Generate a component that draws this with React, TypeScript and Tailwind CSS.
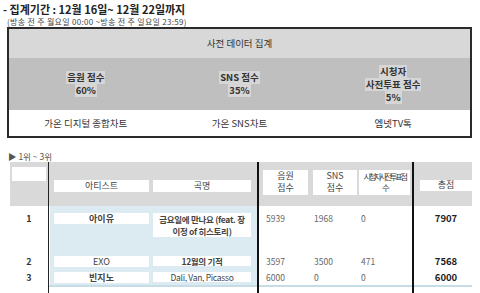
import React from "react";

const F = { fontFamily: '"Noto Sans CJK KR", "Noto Sans", sans-serif' };

function Box({ children, className = "" }: { children: React.ReactNode; className?: string }) {
  return <div className={"bg-white flex items-center justify-center text-center " + className}>{children}</div>;
}

const COLS = "grid grid-cols-[38px_2px_101px_106px_2px_52px_47px_54px_2px_58px] ";

export default function App() {
  return (
    <div className="w-[480px] h-[293px] bg-white overflow-hidden relative text-[#222]" style={F}>
      <div className="pl-[3px] pt-[3px] text-[11px] font-bold leading-[12px] text-[#222]">- 집계기간 : 12월 16일~ 12월 22일까지</div>
      <div className="pl-[7px] pt-[1px] text-[8px] leading-[11px] tracking-[0.3px] text-[#444]">(방송 전 주 월요일 00:00 ~방송 전 주 일요일 23:59)</div>

      <div className="ml-[7px] mt-[0px] w-[465px] h-[111px] border-2 border-[#2a2a2a] flex flex-col">
        <div className="h-[29px] bg-[#d8d8d8] flex items-center justify-center text-[9.5px] text-[#333]">사전 데이터 집계</div>
        <div className="h-[52px] bg-[#bfbfbf] grid grid-cols-3 text-[9.5px] font-bold leading-[13px] text-[#333]">
          <div className="flex flex-col items-center justify-center">
            <span className="bg-[#d6d6d6] px-[1px]">음원 점수</span>
            <span className="bg-[#d6d6d6] px-[1px]">60%</span>
          </div>
          <div className="flex flex-col items-center justify-center">
            <span className="bg-[#d6d6d6] px-[1px]">SNS 점수</span>
            <span className="bg-[#d6d6d6] px-[1px]">35%</span>
          </div>
          <div className="flex flex-col items-center justify-center">
            <span className="bg-[#d6d6d6] px-[1px]">시청자</span>
            <span className="bg-[#d6d6d6] px-[1px]">사전투표 점수</span>
            <span className="bg-[#d6d6d6] px-[1px]">5%</span>
          </div>
        </div>
        <div className="flex-1 bg-white grid grid-cols-3 text-[9.5px] text-[#333]">
          <div className="flex items-center justify-center">가온 디지털 종합차트</div>
          <div className="flex items-center justify-center">가온 SNS차트</div>
          <div className="flex items-center justify-center">엠넷TV톡</div>
        </div>
      </div>

      <div className="pl-[8px] mt-[12px] text-[8.5px] leading-[12px] text-[#555]">▶ 1위 ~ 3위</div>

      <div className="ml-[10px] w-[462px] text-[9px] text-[#444]">
        <div className={COLS + "h-[44px] bg-[#d9d9d9]"}>
          <div className="pt-[5px] px-[2px]"><div className="bg-white h-[14px]" /></div>
          <div className="bg-[#222] w-[1px]" />
          <div className="flex items-center pl-[4px] pr-[2px] pt-[4px]"><Box className="w-full h-[12px]">아티스트</Box></div>
          <div className="flex items-center pl-[2px] pr-[6px] pt-[4px]"><Box className="w-full h-[12px]">곡명</Box></div>
          <div className="bg-[#111]" />
          <div className="flex items-center pl-[4px] pr-[3px] -mt-[4px]"><Box className="w-full h-[25px] leading-[12px]"><span>음원<br />점수</span></Box></div>
          <div className="flex items-center pl-[2px] pr-[1px] -mt-[4px]"><Box className="w-full h-[25px] leading-[12px]"><span>SNS<br />점수</span></Box></div>
          <div className="flex items-center pl-[1px] pr-[2px] -mt-[4px]"><Box className="w-full h-[25px] leading-[11px] text-[8.5px] tracking-[-2.6px] whitespace-nowrap overflow-hidden"><span>시청자사전투표점<br />수</span></Box></div>
          <div className="bg-[#111]" />
          <div className="flex items-center pl-[6px] pt-[2px]"><Box className="w-full h-[11px]">총점</Box></div>
        </div>
        {[
          { r: "1", a: "아이유", s: <span>금요일에 만나요 (feat. 장<br />이정 of 히스토리)</span>, n: ["5939", "1968", "0"], t: "7907", h: "h-[44px]", pt: "pt-[7px]", sh: "h-[24px]" },
          { r: "2", a: "EXO", s: <span>12월의 기적</span>, n: ["3597", "3500", "471"], t: "7568", h: "h-[18px]", pt: "pt-[6px]", sh: "h-[10px]" },
          { r: "3", a: "빈지노", s: <span>Dali, Van, Picasso</span>, n: ["6000", "0", "0"], t: "6000", h: "h-[17px]", pt: "pt-[4px]", sh: "h-[10px]" },
        ].map((row, i) => (
          <div key={i} className={COLS + row.h}>
            <div className={"bg-white text-center font-bold text-[9px] leading-[11px] text-[#333] " + row.pt}>{row.r}</div>
            <div className="bg-[#222] w-[1px]" />
            <div className={"bg-[#dbebf1] pl-[4px] pr-[2px] " + row.pt}>
              <Box className={"h-[11px] leading-[11px] " + (i === 1 ? "font-normal" : "font-bold")}>{row.a}</Box>
            </div>
            <div className={"bg-[#dbebf1] pl-[2px] pr-[6px] " + row.pt}>
              <Box className={"leading-[12px] whitespace-nowrap text-[8.5px] tracking-[-0.3px] overflow-hidden " + row.sh + (i === 2 ? " font-normal" : " font-bold")}>{row.s}</Box>
            </div>
            <div className="bg-[#111]" />
            {row.n.map((v, j) => (
              <div key={j} className={"bg-white text-[8.5px] leading-[11px] text-[#666] " + (j === 0 ? "pl-[7px] " : "pl-[3px] ") + row.pt}>{v}</div>
            ))}
            <div className="bg-[#111]" />
            <div className={"bg-white text-center pl-[6px] font-bold text-[9.5px] leading-[11px] text-[#222] " + row.pt}>{row.t}</div>
          </div>
        ))}
        <div className={COLS + "h-[2px] bg-[#c7dde6]"}>
          <div className="bg-white" />
          <div className="bg-[#222] w-[1px]" />
          <div /><div />
          <div className="bg-[#111]" />
          <div /><div /><div />
          <div className="bg-[#111]" />
          <div />
        </div>
        <div className={COLS + "h-[10px]"}>
          <div />
          <div className="bg-[#222] w-[1px]" />
          <div /><div />
          <div className="bg-[#111]" />
          <div /><div /><div />
          <div className="bg-[#111]" />
          <div />
        </div>
      </div>
    </div>
  );
}
